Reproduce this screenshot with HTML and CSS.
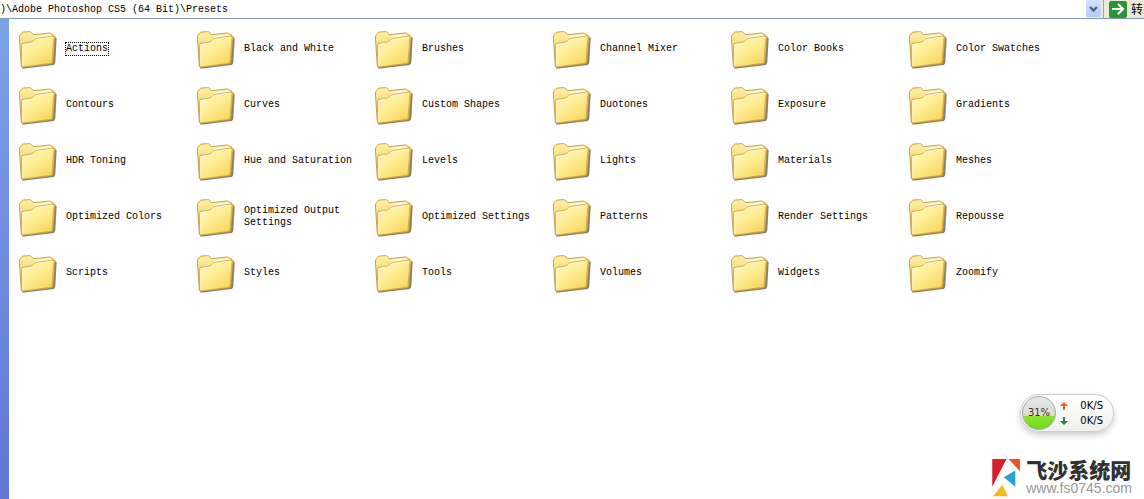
FILE: index.html
```html
<!DOCTYPE html>
<html lang="en">
<head>
<meta charset="utf-8">
<title>Presets</title>
<link rel="stylesheet" href="styles.css">
</head>
<body>
<svg class="defs" aria-hidden="true">
  <defs>
    <linearGradient id="front" x1="0" y1="0" x2="0.7" y2="1"><stop offset="0" stop-color="#fffac8"/><stop offset="0.5" stop-color="#feee96"/><stop offset="1" stop-color="#f8d65c"/></linearGradient>
    <linearGradient id="back" x1="0" y1="0" x2="0" y2="1"><stop offset="0" stop-color="#fff0a4"/><stop offset="1" stop-color="#e6bf4e"/></linearGradient>
    <symbol id="folder" viewBox="0 0 120 120">
      <path d="M14 116L107 105Q111 103 112 96L116 24L109 20L104 99L12 112Z" fill="#66604c" opacity="0.8"/>
      <path d="M4 21Q5 17 8 13L12 8Q14 6 18 6L35 5Q39 5 41 8L46 14L94 9Q97 9 100 12L109 17Q112 19 111 24L105 96Q105 100 100 101L15 112Q11 113 10 108Z" fill="url(#back)" stroke="#b8923a" stroke-width="2.5"/>
      <path d="M48 20L95 13L103 18L56 25Z" fill="#fffbe2"/>
      <path d="M11 44Q11 41 15 40L41 36Q46 35 48 31L51 28Q53 26 57 25L104 18Q108 18 108 22L102 96Q102 99 98 100L16 111Q12 112 11 108Z" fill="url(#front)" stroke="#c9a444" stroke-width="2.5"/>
      <path d="M15 106L14 45L44 39Q49 37 51 32L55 29L104 22" fill="none" stroke="#fffce0" stroke-width="2"/>
    </symbol>
  </defs>
</svg>
<header class="address-bar">
  <input class="path" type="text" aria-label="Address" value=")\Adobe Photoshop CS5 (64 Bit)\Presets">
  <button class="drop" type="button" aria-label="Show addresses"><svg viewBox="0 0 9 8"><path d="M1 2L4.5 5.5L8 2" fill="none" stroke="#4d6185" stroke-width="2.4"/></svg></button>
  <button class="go" type="button"><svg viewBox="0 0 18 17"><rect width="18" height="17" rx="2" fill="#2e9238"/><path d="M3 8H14M9 3L14 8L9 13" fill="none" stroke="#fff" stroke-width="2.2"/></svg><span>转</span></button>
</header>
<div class="body">
  <aside class="side"></aside>
  <main class="files">
    <button class="item" type="button"><svg><use href="#folder"/></svg><span class="current">Actions</span></button>
    <button class="item" type="button"><svg><use href="#folder"/></svg><span>Black and White</span></button>
    <button class="item" type="button"><svg><use href="#folder"/></svg><span>Brushes</span></button>
    <button class="item" type="button"><svg><use href="#folder"/></svg><span>Channel Mixer</span></button>
    <button class="item" type="button"><svg><use href="#folder"/></svg><span>Color Books</span></button>
    <button class="item" type="button"><svg><use href="#folder"/></svg><span>Color Swatches</span></button>
    <button class="item" type="button"><svg><use href="#folder"/></svg><span>Contours</span></button>
    <button class="item" type="button"><svg><use href="#folder"/></svg><span>Curves</span></button>
    <button class="item" type="button"><svg><use href="#folder"/></svg><span>Custom Shapes</span></button>
    <button class="item" type="button"><svg><use href="#folder"/></svg><span>Duotones</span></button>
    <button class="item" type="button"><svg><use href="#folder"/></svg><span>Exposure</span></button>
    <button class="item" type="button"><svg><use href="#folder"/></svg><span>Gradients</span></button>
    <button class="item" type="button"><svg><use href="#folder"/></svg><span>HDR Toning</span></button>
    <button class="item" type="button"><svg><use href="#folder"/></svg><span>Hue and Saturation</span></button>
    <button class="item" type="button"><svg><use href="#folder"/></svg><span>Levels</span></button>
    <button class="item" type="button"><svg><use href="#folder"/></svg><span>Lights</span></button>
    <button class="item" type="button"><svg><use href="#folder"/></svg><span>Materials</span></button>
    <button class="item" type="button"><svg><use href="#folder"/></svg><span>Meshes</span></button>
    <button class="item" type="button"><svg><use href="#folder"/></svg><span>Optimized Colors</span></button>
    <button class="item" type="button"><svg><use href="#folder"/></svg><span>Optimized Output Settings</span></button>
    <button class="item" type="button"><svg><use href="#folder"/></svg><span>Optimized Settings</span></button>
    <button class="item" type="button"><svg><use href="#folder"/></svg><span>Patterns</span></button>
    <button class="item" type="button"><svg><use href="#folder"/></svg><span>Render Settings</span></button>
    <button class="item" type="button"><svg><use href="#folder"/></svg><span>Repousse</span></button>
    <button class="item" type="button"><svg><use href="#folder"/></svg><span>Scripts</span></button>
    <button class="item" type="button"><svg><use href="#folder"/></svg><span>Styles</span></button>
    <button class="item" type="button"><svg><use href="#folder"/></svg><span>Tools</span></button>
    <button class="item" type="button"><svg><use href="#folder"/></svg><span>Volumes</span></button>
    <button class="item" type="button"><svg><use href="#folder"/></svg><span>Widgets</span></button>
    <button class="item" type="button"><svg><use href="#folder"/></svg><span>Zoomify</span></button>
  </main>
</div>
<section class="monitor" aria-label="Network monitor">
  <div class="gauge">31%</div>
  <div class="rates">
    <div class="rate"><svg class="up" viewBox="0 0 8 8"><path d="M4 0L8 4H5V8H3V4H0Z"/></svg><span>0K/S</span></div>
    <div class="rate"><svg class="down" viewBox="0 0 8 8"><path d="M4 8L8 4H5V0H3V4H0Z"/></svg><span>0K/S</span></div>
  </div>
</section>
<div class="brand">
  <svg viewBox="0 0 84 112" aria-hidden="true">
    <path d="M0 0H42L0 82Z" fill="#d71f2b"/>
    <path d="M48 0H82V36Z" fill="#e9552b"/>
    <path d="M68 34V82L34 54Z" fill="#2b9fd8"/>
    <path d="M30 76L46 110H2Z" fill="#f5b91c"/>
  </svg>
  <div><div class="brand-name">飞沙系统网</div><div class="brand-url">www.fs0745.com</div></div>
</div>
</body>
</html>
```

FILE: styles.css
```css
* { box-sizing: border-box; }
body {
  margin: 0;
  min-height: 100vh;
  display: flex;
  flex-direction: column;
  background: #fff;
  color: #000;
  font: 10px/12px "Liberation Mono", "Noto Sans CJK SC", monospace;
}
button, input { font: inherit; color: inherit; border: 0; padding: 0; margin: 0; background: none; }
.defs { position: absolute; width: 0; height: 0; }
.address-bar {
  display: flex;
  height: 19px;
  background: #ece9d8;
  border-bottom: 1px solid #7f9db9;
}
.path { flex: 1; min-width: 0; padding-top: 2px; background: #fff; outline: 0; }
.drop {
  width: 15px;
  height: 17px;
  border-radius: 2px;
  background: linear-gradient(#d3e0fd, #b7cbf8);
  display: grid;
  place-items: center;
}
.drop svg { width: 9px; height: 8px; }
.go {
  width: 41px;
  margin-left: 2px;
  padding-left: 5px;
  border-left: 1px solid #aca899;
  display: flex;
  align-items: center;
  gap: 4px;
  white-space: nowrap;
  font: 12px/16px "Noto Sans CJK SC", sans-serif;
}
.go svg { width: 18px; height: 17px; flex: none; }
.body { flex: 1; display: flex; }
.side { width: 9px; background: linear-gradient(#7ba2e7, #6375d6); }
.files {
  flex: 1;
  display: grid;
  grid-template-columns: repeat(auto-fill, 178px);
  grid-auto-rows: 40px;
  row-gap: 16px;
  padding: 11px 0 0 9px;
}
.item { display: flex; align-items: center; gap: 8px; text-align: left; }
.item svg { width: 40px; height: 40px; flex: none; }
.item span { max-width: 112px; margin-bottom: 2px; }
.item .current { outline: 1px dotted #000; }
.monitor {
  position: absolute;
  right: 30px;
  bottom: 67px;
  width: 94px;
  height: 38px;
  padding: 1px;
  display: flex;
  align-items: center;
  gap: 4px;
  border: 1px solid #ccc;
  border-radius: 19px;
  background: linear-gradient(#fff, #f0f0f0);
  box-shadow: 0 3px 6px #0003;
  font: 10px/15px "DejaVu Sans", sans-serif;
}
.gauge {
  width: 34px;
  height: 34px;
  border: 1px solid #a5aaa5;
  border-radius: 50%;
  background: linear-gradient(#e8e8e8, #d8d8d8 60%, #8be42f 60%, #70d820);
  color: #4a2a20;
  line-height: 32px;
  text-align: center;
}
.rates { flex: 1; padding-right: 9px; }
.rate { display: flex; align-items: center; justify-content: space-between; }
.rate svg { width: 8px; height: 8px; }
.up { fill: #ee6418; }
.down { fill: #23843b; }
.brand {
  position: absolute;
  right: 12px;
  bottom: 2px;
  display: flex;
  align-items: center;
  gap: 5px;
}
.brand svg { width: 29px; height: 38px; }
.brand-name { font: 900 21px/22px "Noto Sans CJK SC", sans-serif; color: #303030; }
.brand-url { font: 14px/17px "Liberation Sans", Arial, sans-serif; color: #999; }
```
